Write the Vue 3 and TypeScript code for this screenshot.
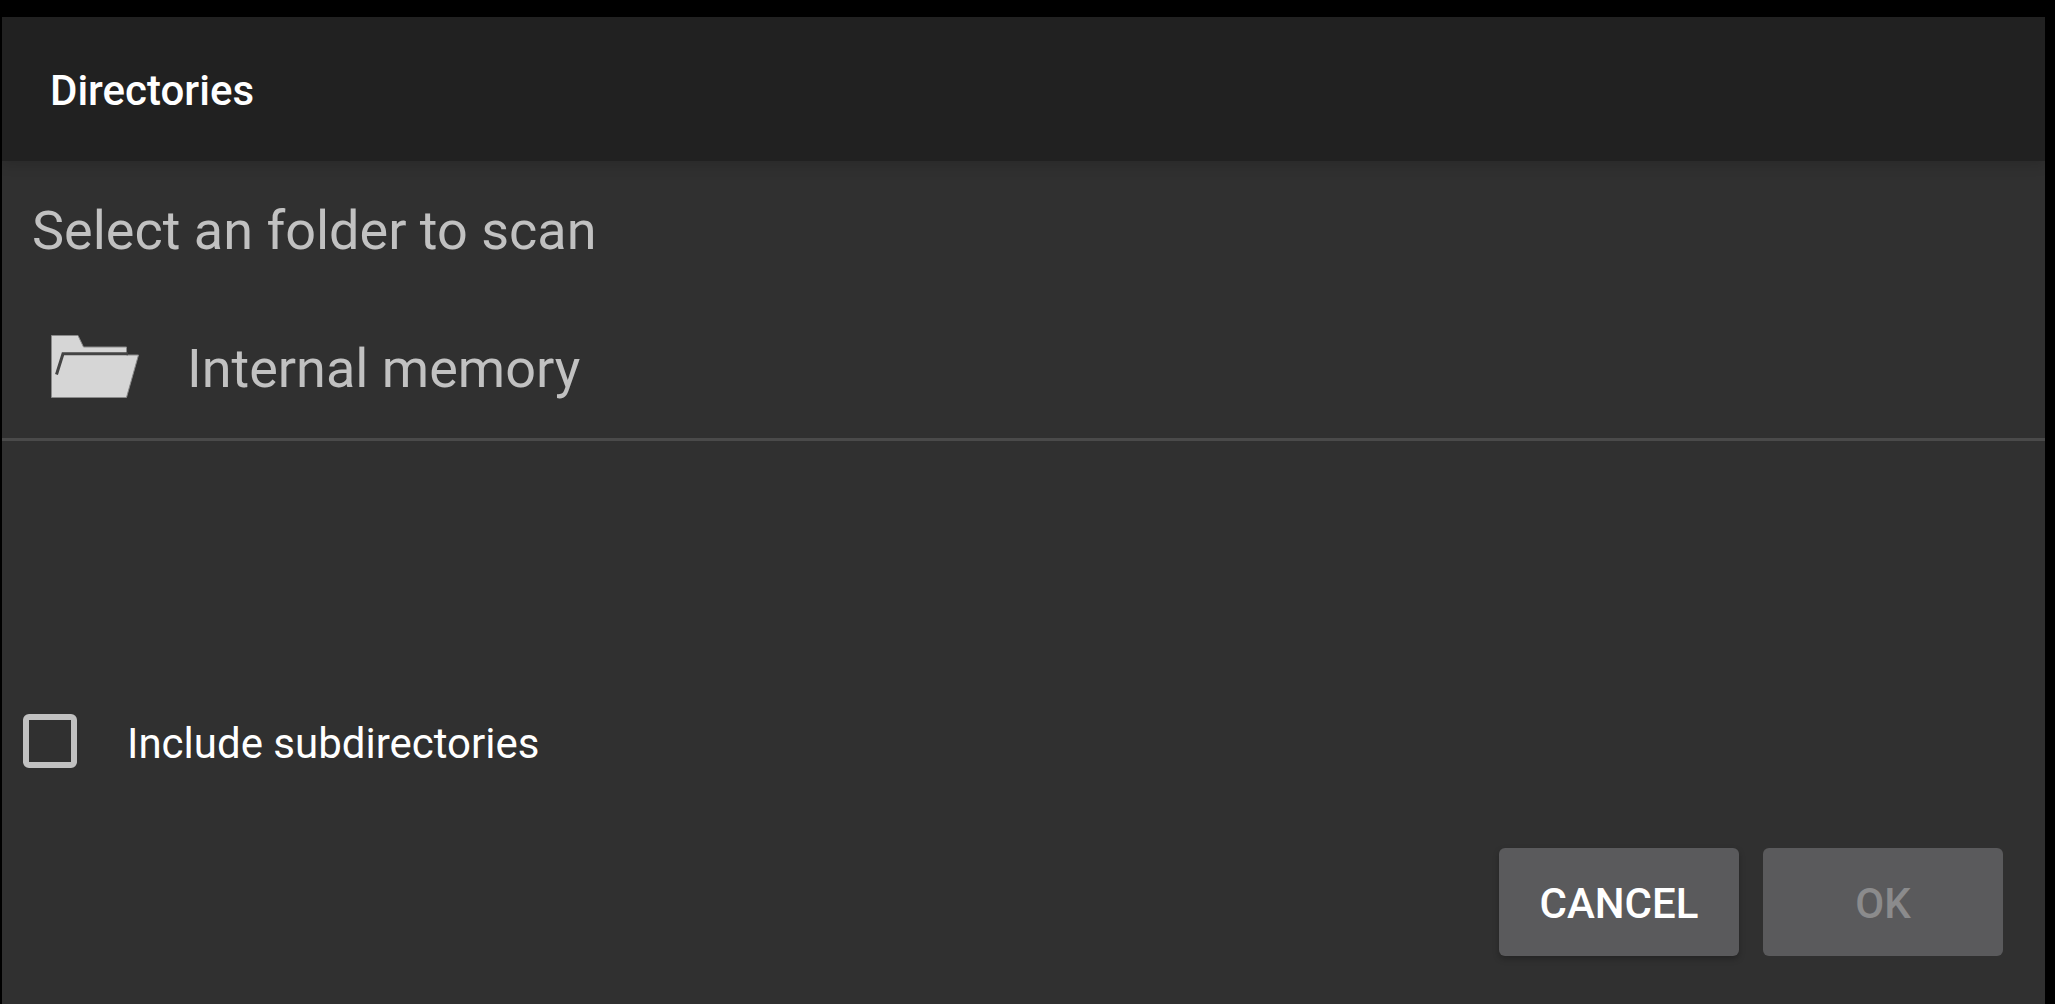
<script setup lang="ts">
import { ref } from 'vue'

interface Folder {
  name: string
}

const folders: Folder[] = [{ name: 'Internal memory' }]
const selected = ref<Folder | null>(null)
const includeSubdirectories = ref(false)
</script>

<template>
  <div class="screen">
    <main class="dialog">
      <header class="app-bar">
        <h1 class="title">Directories</h1>
      </header>

      <p class="prompt">Select an folder to scan</p>

      <ul class="folders">
        <li v-for="folder in folders" :key="folder.name">
          <button class="folder" type="button" @click="selected = folder">
            <svg class="folder-icon" viewBox="0 0 88 63" aria-hidden="true">
              <path
                class="folder-shape"
                d="M.5.5H27L32.5 12H75.500V20H87.500L75.500 62.500H.5Z"
              />
              <path class="folder-slit" d="M5.500 39.500L12 18.700H77" />
            </svg>
            <span class="folder-name">{{ folder.name }}</span>
          </button>
        </li>
      </ul>

      <label class="option">
        <input v-model="includeSubdirectories" class="checkbox" type="checkbox" />
        <span class="option-text">Include subdirectories</span>
      </label>

      <footer class="actions">
        <button class="action raised" type="button">CANCEL</button>
        <button class="action" type="button" :disabled="!selected">OK</button>
      </footer>
    </main>
  </div>
</template>

<style>
body {
  margin: 0;
  background: #000;
}
</style>

<style scoped>
.screen {
  box-sizing: border-box;
  min-height: 100vh;
  padding: 17px 10px 0 2px;
  display: flex;
  background: #000;
  font-family: Roboto, "Liberation Sans", sans-serif;
  color: #fff;
}

.dialog {
  flex: 1;
  display: flex;
  flex-direction: column;
  background: #303030;
}

.app-bar {
  box-sizing: border-box;
  display: flex;
  align-items: center;
  height: 144px;
  padding: 4px 48px 0;
  background: #212121;
  box-shadow: 0 4px 12px rgba(0, 0, 0, 0.14);
}

.title {
  margin: 0;
  font-size: 42px;
  line-height: 56px;
  font-weight: 500;
}

.prompt {
  margin: 0;
  padding: 38px 30px 32px;
  font-size: 54px;
  line-height: 64px;
  color: #c1c1c1;
}

.folders {
  flex: 1;
  margin: 0;
  padding: 0;
  list-style: none;
}

.folder {
  display: flex;
  align-items: center;
  gap: 48px;
  width: 100%;
  height: 146px;
  padding: 0 49px;
  border: 0;
  border-bottom: 3px solid #4a4a4a;
  background: none;
  font: inherit;
  font-size: 54px;
  line-height: 64px;
  color: #c1c1c1;
  text-align: left;
}

.folder-icon {
  width: 88px;
  height: 63px;
}

.folder-name {
  padding-top: 4px;
}

.folder-shape {
  fill: #d6d6d6;
  stroke: #8a8a8a;
  stroke-width: 1;
}

.folder-slit {
  fill: none;
  stroke: #444;
  stroke-width: 3;
}

.option {
  display: flex;
  align-items: center;
  gap: 50px;
  height: 96px;
  padding: 0 21px;
  font-size: 42px;
  line-height: 56px;
}

.option-text {
  padding-top: 6px;
}

.checkbox {
  appearance: none;
  box-sizing: border-box;
  width: 54px;
  height: 54px;
  margin: 0;
  border: 6px solid #c1c1c1;
  border-radius: 6px;
}

.checkbox:checked {
  background: #c1c1c1;
}

.actions {
  display: flex;
  justify-content: flex-end;
  gap: 24px;
  padding: 59px 42px 48px;
}

.action {
  width: 240px;
  height: 108px;
  padding: 4px 0 0;
  border: 0;
  border-radius: 6px;
  background: #5a5a5c;
  font: inherit;
  font-size: 42px;
  line-height: 56px;
  font-weight: 500;
  color: #fff;
}

.action:disabled {
  color: #8b8b8c;
}

.raised {
  box-shadow: 0 3px 6px rgba(0, 0, 0, 0.25);
}
</style>
